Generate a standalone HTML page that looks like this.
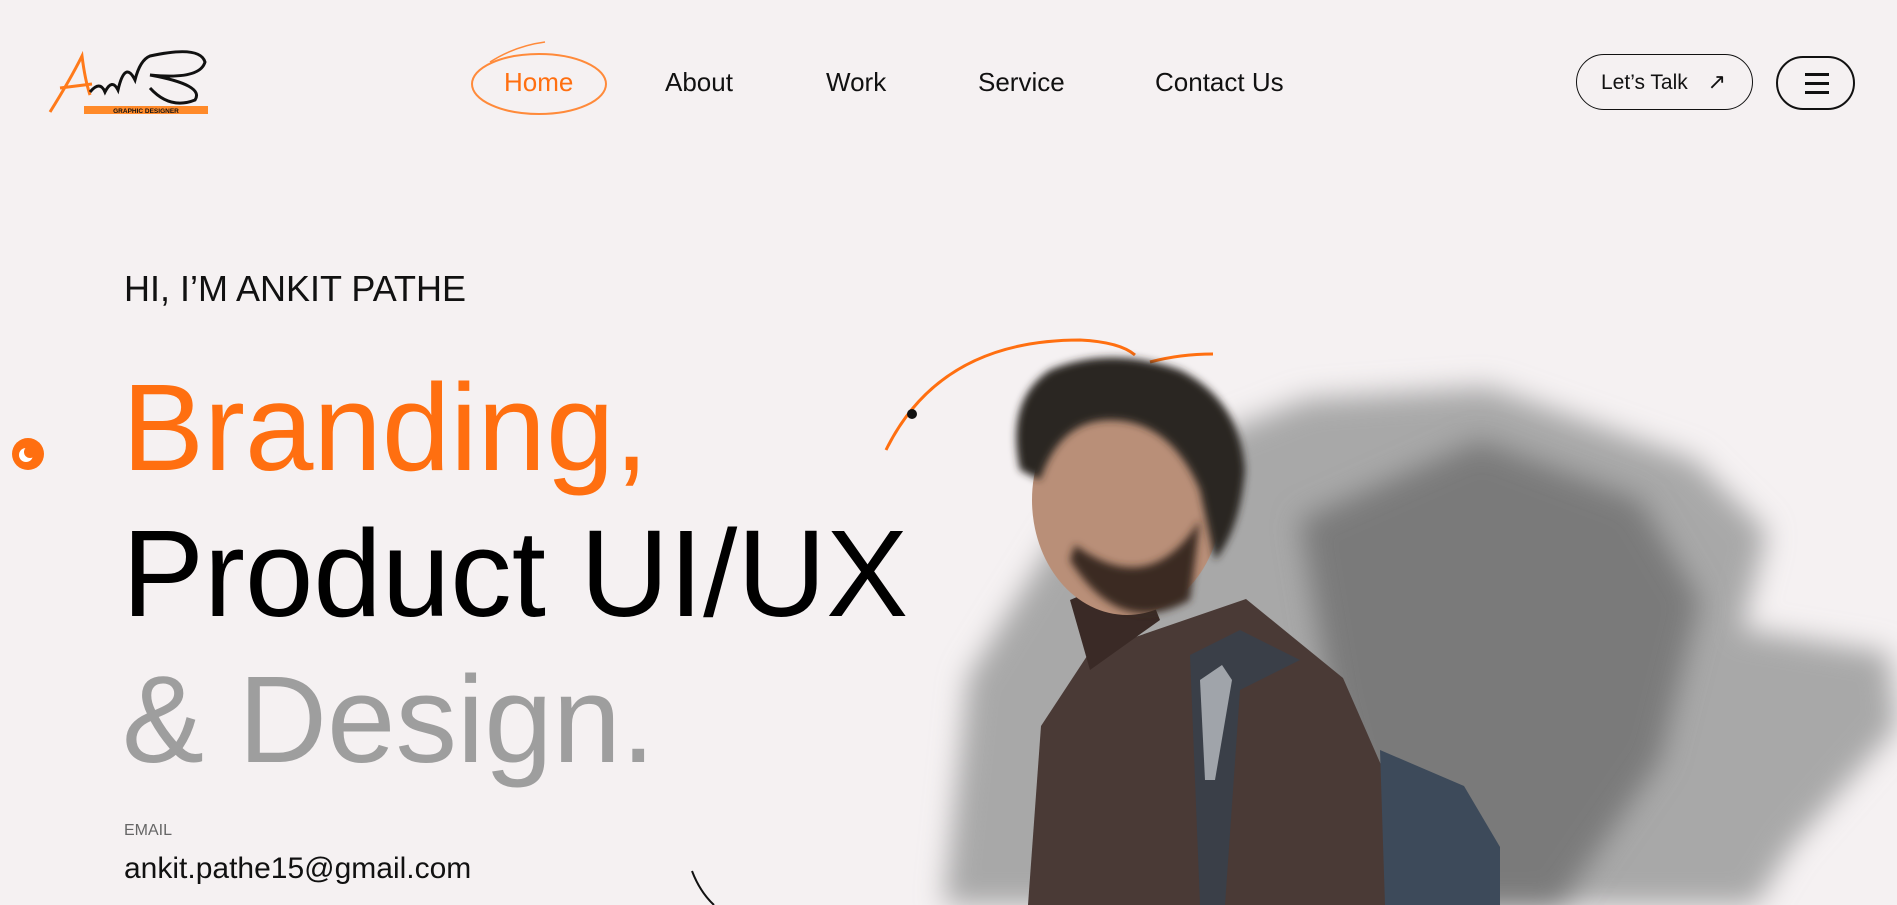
<!DOCTYPE html>
<html><head><meta charset="utf-8"><style>
html,body{margin:0;padding:0;width:1897px;height:905px;overflow:hidden;background:#f5f1f2;font-family:"Liberation Sans",sans-serif;}
.abs{position:absolute;}
.nav{position:absolute;top:67px;font-size:26px;color:#111;white-space:nowrap;}
</style></head><body>
<svg class="abs" style="left:0;top:0" width="1897" height="905" viewBox="0 0 1897 905">
<defs>
<filter id="b1"><feGaussianBlur stdDeviation="14"/></filter>
<filter id="b2"><feGaussianBlur stdDeviation="4"/></filter>
</defs>
<polygon filter="url(#b1)" fill="#a8a8a8" points="968,678 1089,484 1307,399 1488,387 1694,460 1767,532 1742,629 1888,653 1897,726 1791,847 1755,905 944,905"/>
<polygon filter="url(#b1)" fill="#7a7a7a" points="1300,520 1480,440 1640,500 1700,600 1660,760 1560,905 1380,905 1330,700"/>
<path d="M886,450 Q940,340 1080,340 Q1120,342 1135,355" fill="none" stroke="#ff6f10" stroke-width="3"/>
<path d="M1150,362 Q1180,354 1213,354" fill="none" stroke="#ff6f10" stroke-width="3"/>
<circle cx="912" cy="414" r="5" fill="#111"/>
<path d="M692,871 Q700,892 714,905" fill="none" stroke="#111" stroke-width="2"/>
<polygon fill="#4a3a36" points="1028,905 1041,726 1089,653 1246,599 1343,678 1385,774 1385,905"/>
<polygon fill="#3d4a5a" points="1380,750 1464,786 1500,847 1500,905 1385,905"/>
<polygon fill="#3a3f48" points="1190,655 1240,630 1300,660 1240,690 1225,905 1200,905"/>
<polygon fill="#a0a4aa" points="1200,680 1222,665 1232,680 1215,780 1205,780"/>
<polygon fill="#3a2a26" points="1070,600 1140,570 1160,620 1090,670"/>
<ellipse cx="1127" cy="500" rx="95" ry="115" fill="#b98f78"/>
<path d="M1020,470 Q1005,400 1050,370 Q1110,345 1180,370 Q1240,400 1245,470 Q1240,530 1215,560 L1200,490 Q1170,420 1110,420 Q1060,420 1040,480 Z" fill="#2b2524" filter="url(#b2)"/>
<path d="M1070,560 Q1120,640 1190,600 L1200,520 Q1150,600 1075,545 Z" fill="#3a2a24" filter="url(#b2)"/>
<circle cx="28" cy="454" r="16" fill="#ff6f10"/>
<circle cx="26" cy="455" r="7" fill="#fff"/>
<circle cx="30" cy="452" r="6" fill="#ff6f10"/>
<ellipse cx="539" cy="84" rx="67" ry="30" fill="none" stroke="#ff8a3a" stroke-width="2"/>
<path d="M490,62 Q515,46 545,42" fill="none" stroke="#ff8a3a" stroke-width="1.5"/>
<path d="M50,112 Q70,80 82,56 Q85,80 90,95 M60,88 L92,84" fill="none" stroke="#ff7a1a" stroke-width="3"/>
<path d="M90,92 Q100,80 105,92 Q112,78 118,90 Q125,60 135,80 Q140,60 150,56 Q200,45 205,62 Q200,80 150,75 Q205,85 195,100 Q170,110 150,88" fill="none" stroke="#111" stroke-width="3"/>
<rect x="84" y="106" width="124" height="8" fill="#ff8a2a"/>
<text x="146" y="113" font-size="6.5" text-anchor="middle" font-family="Liberation Sans" font-weight="bold" fill="#111">GRAPHIC DESIGNER</text>
</svg>
<div class="nav" style="left:504px;color:#ff6f10">Home</div>
<div class="nav" style="left:665px">About</div>
<div class="nav" style="left:826px">Work</div>
<div class="nav" style="left:978px">Service</div>
<div class="nav" style="left:1155px">Contact Us</div>
<div class="abs" style="left:1576px;top:54px;width:177px;height:56px;border:1.5px solid #111;border-radius:28px;box-sizing:border-box;font-size:21px;line-height:53px;padding-left:24px;color:#111">Let’s Talk <span style="margin-left:14px;font-size:22px">↗</span></div>
<div class="abs" style="left:1776px;top:56px;width:79px;height:54px;border:2px solid #111;border-radius:28px;box-sizing:border-box">
 <div class="abs" style="left:27px;top:15px;width:24px;height:3px;background:#111"></div>
 <div class="abs" style="left:27px;top:24px;width:24px;height:3px;background:#111"></div>
 <div class="abs" style="left:27px;top:33px;width:24px;height:3px;background:#111"></div>
</div>
<div class="abs" style="left:124px;top:268px;font-size:36px;color:#111">HI, I’M ANKIT PATHE</div>
<div class="abs" style="left:122px;top:356px;font-size:123px;line-height:146px;white-space:nowrap">
<div style="color:#ff6f10">Branding,</div>
<div style="color:#000">Product UI/UX</div>
<div style="color:#9e9e9e">&amp; Design.</div>
</div>
<div class="abs" style="left:124px;top:822px;font-size:16px;color:#666">EMAIL</div>
<div class="abs" style="left:124px;top:852px;font-size:30px;color:#111">ankit.pathe15@gmail.com</div>
</body></html>
